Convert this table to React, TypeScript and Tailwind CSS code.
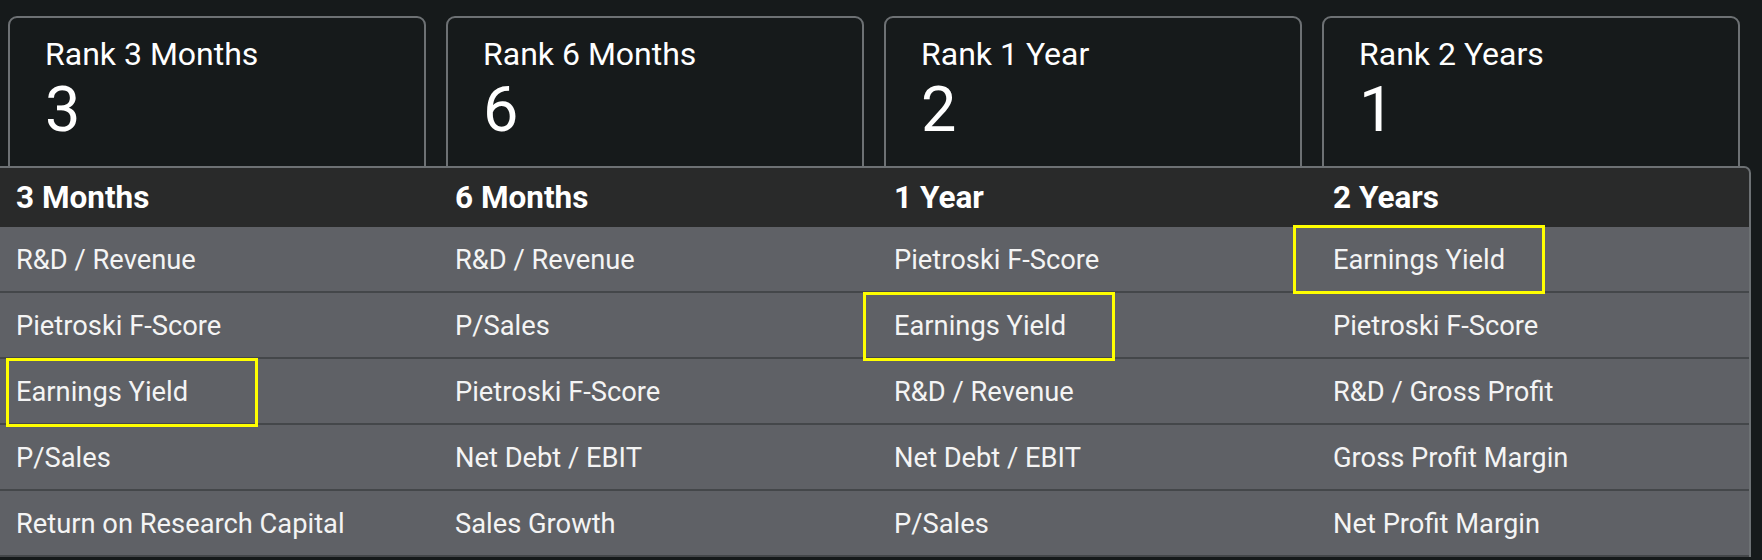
import React from "react";

const cards = [
  { label: "Rank 3 Months", value: "3" },
  { label: "Rank 6 Months", value: "6" },
  { label: "Rank 1 Year", value: "2" },
  { label: "Rank 2 Years", value: "1" },
];

const headers = ["3 Months", "6 Months", "1 Year", "2 Years"];

const rows = [
  ["R&D / Revenue", "R&D / Revenue", "Pietroski F-Score", "Earnings Yield"],
  ["Pietroski F-Score", "P/Sales", "Earnings Yield", "Pietroski F-Score"],
  ["Earnings Yield", "Pietroski F-Score", "R&D / Revenue", "R&D / Gross Profit"],
  ["P/Sales", "Net Debt / EBIT", "Net Debt / EBIT", "Gross Profit Margin"],
  ["Return on Research Capital", "Sales Growth", "P/Sales", "Net Profit Margin"],
];

// highlight boxes drawn over the table (annotation layer)
const highlights = [
  { key: "c1", className: "left-[6px] top-[190px]" },
  { key: "c3", className: "left-[863px] top-[124px]" },
  { key: "c4", className: "left-[1293px] top-[57px]" },
];

function RankCard({ label, value }: { label: string; value: string }) {
  return (
    <div className="h-[180px] w-[418px] shrink-0 rounded-[9px] border-2 border-[#6d7174] bg-[#161a1b] px-[35px] pt-[13px] text-white">
      <div className="text-[32px] leading-[47px]">{label}</div>
      <div className="text-[63px] leading-none">{value}</div>
    </div>
  );
}

export default function App() {
  return (
    <div
      className="h-[560px] w-[1762px] overflow-hidden bg-[#161a1b]"
      style={{ fontFamily: "Roboto, 'Open Sans', sans-serif" }}
    >
      <div className="flex gap-[20px] pl-[8px] pt-[16px]">
        {cards.map((c) => (
          <RankCard key={c.label} label={c.label} value={c.value} />
        ))}
      </div>

      <div className="relative z-10 -mt-[30px] w-[1751px] overflow-hidden rounded-tr-[7px] border-t-2 border-r-2 border-[#6d7174] bg-[#5f6166]">
        <div className="grid h-[59px] grid-cols-[439px_439px_439px_1fr] items-center bg-[#292a2a] pb-[1px]">
          {headers.map((h) => (
            <div key={h} className="px-[16px] text-[31.5px] font-bold leading-[47px] text-white">
              {h}
            </div>
          ))}
        </div>
        {rows.map((r, i) => (
          <div
            key={i}
            className="grid h-[66px] grid-cols-[439px_439px_439px_1fr] items-center border-b-2 border-[#44474a] pt-[2px]"
          >
            {r.map((cell, j) => (
              <div key={j} className="px-[16px] text-[27.3px] leading-[42px] text-[#f4f4f4]">
                {cell}
              </div>
            ))}
          </div>
        ))}
        {highlights.map((h) => (
          <div
            key={h.key}
            className={`pointer-events-none absolute h-[69px] w-[252px] border-[3px] border-[#ffff00] ${h.className}`}
          />
        ))}
      </div>
    </div>
  );
}
